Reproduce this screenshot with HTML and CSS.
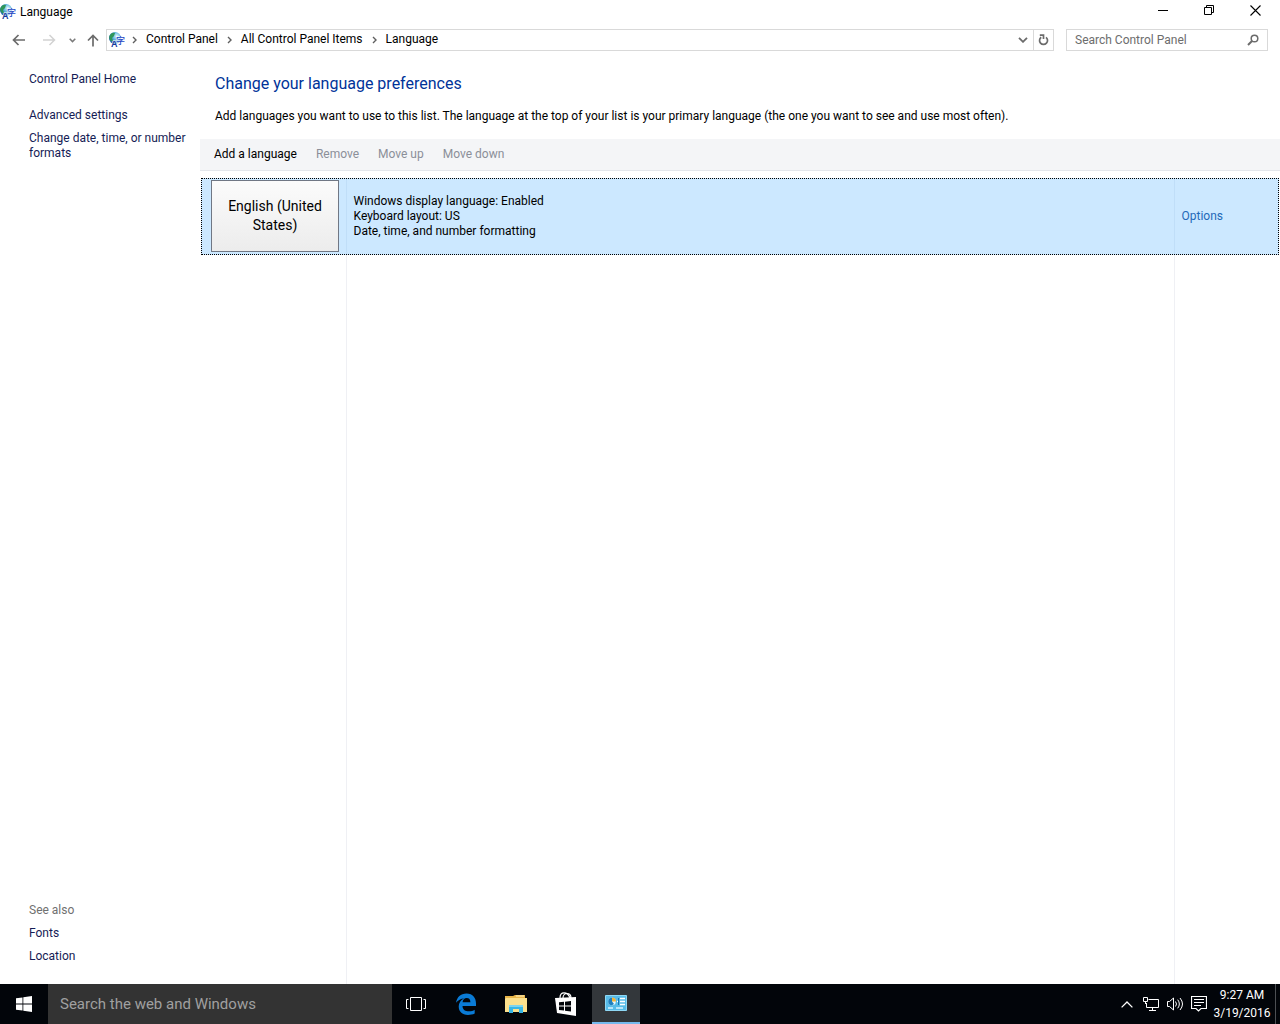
FILE: index.html
```html
<!DOCTYPE html>
<html lang="en">
<head>
<meta charset="utf-8">
<title>Language</title>
<link rel="stylesheet" href="styles.css">
</head>
<body>
<svg class="defs" aria-hidden="true">
  <defs>
    <radialGradient id="globe" cx="65%" cy="35%" r="75%">
      <stop offset="0" stop-color="#e4f8ff"/>
      <stop offset="0.45" stop-color="#5cb4dc"/>
      <stop offset="1" stop-color="#0a4f9c"/>
    </radialGradient>
    <symbol id="language" viewBox="0 0 16 16">
      <circle cx="6" cy="6" r="6" fill="url(#globe)"/>
      <path d="M1 3Q3 0 6 1L5 4L3 6L4 9L2 9Q-1 6 1 3Z" fill="#2f9659"/>
      <path d="M7 4H16V12H9V16H2V12L4 8H7Z" fill="#fff" opacity=".6"/>
      <text class="glyph-a" x="2" y="15">A</text>
      <text class="glyph-zi" x="7" y="12">字</text>
    </symbol>
    <symbol id="chevron" viewBox="0 0 5 8">
      <path d="M1 1L4 4L1 7" fill="none" stroke="currentColor" stroke-width="1.4"/>
    </symbol>
  </defs>
</svg>

<header class="titlebar">
  <svg class="app-icon"><use href="#language"/></svg>
  <h1 class="window-title">Language</h1>
  <button class="window-button" aria-label="Minimize"><svg width="11" height="11" viewBox="0 0 11 11"><path d="M0 5.5H10" stroke="#000"/></svg></button>
  <button class="window-button" aria-label="Restore"><svg width="11" height="11" viewBox="0 0 11 11"><path d="M.5 2.5H7.500V9.500H.5ZM2.500 2.500V.5H9.500V7.500H7.500" fill="none" stroke="#000"/></svg></button>
  <button class="window-button" aria-label="Close"><svg width="11" height="11" viewBox="0 0 11 11"><path d="M.5 .5L10.500 10.500M10.500 .5L.5 10.500" stroke="#000" stroke-width="1.1"/></svg></button>
</header>

<nav class="navbar" aria-label="Address">
  <button class="nav-button" aria-label="Back"><svg width="14" height="12" viewBox="0 0 14 12"><path d="M1.500 6H13M6.500 1L1.500 6L6.500 11" fill="none" stroke="#6b6b6b" stroke-width="1.700"/></svg></button>
  <button class="nav-button" aria-label="Forward" disabled><svg width="14" height="12" viewBox="0 0 14 12"><path d="M1 6H12.500M7.500 1L12.500 6L7.500 11" fill="none" stroke="#d2d2d2" stroke-width="1.500"/></svg></button>
  <button class="nav-button recent" aria-label="Recent locations"><svg width="7" height="5" viewBox="0 0 7 5"><path d="M.7 .8L3.500 3.600L6.300 .8" fill="none" stroke="#7a7a7a" stroke-width="1.500"/></svg></button>
  <button class="nav-button up" aria-label="Up"><svg width="12" height="13" viewBox="0 0 12 13"><path d="M6 12.500V1.500M1 6.500L6 1.500L11 6.500" fill="none" stroke="#6b6b6b" stroke-width="1.700"/></svg></button>
  <div class="address">
    <svg class="app-icon"><use href="#language"/></svg>
    <svg class="crumb-arrow"><use href="#chevron"/></svg>
    <a class="crumb" href="#">Control Panel</a>
    <svg class="crumb-arrow"><use href="#chevron"/></svg>
    <a class="crumb" href="#">All Control Panel Items</a>
    <svg class="crumb-arrow"><use href="#chevron"/></svg>
    <a class="crumb" href="#">Language</a>
    <button class="address-button history" aria-label="Previous locations"><svg width="10" height="6" viewBox="0 0 10 6"><path d="M1 .8L5 4.800L9 .8" fill="none" stroke="#6b6b6b" stroke-width="1.800"/></svg></button>
    <button class="address-button refresh" aria-label="Refresh"><svg width="11" height="12" viewBox="0 0 11 12"><path d="M8 3.300A4 4 0 1 1 3.200 3.200M1.800 1.200H5.500V5" fill="none" stroke="#6b6b6b" stroke-width="1.700"/></svg></button>
  </div>
  <label class="search">
    <input class="search-input" type="text" placeholder="Search Control Panel" aria-label="Search Control Panel">
    <svg width="12" height="12" viewBox="0 0 12 12"><path d="M5 7L1 11" stroke="#6b6b6b" stroke-width="2"/><circle cx="7.500" cy="4.500" r="3.300" fill="none" stroke="#6b6b6b" stroke-width="1.500"/></svg>
  </label>
</nav>

<div class="content">
  <aside class="sidebar">
    <a class="side-link home" href="#">Control Panel Home</a>
    <a class="side-link" href="#">Advanced settings</a>
    <a class="side-link" href="#">Change date, time, or number formats</a>
    <div class="see-also">
      <h3 class="see-title">See also</h3>
      <a class="side-link" href="#">Fonts</a>
      <a class="side-link" href="#">Location</a>
    </div>
  </aside>
  <main class="main">
    <h2 class="heading">Change your language preferences</h2>
    <p class="intro">Add languages you want to use to this list. The language at the top of your list is your primary language (the one you want to see and use most often).</p>
    <div class="toolbar">
      <button class="tool">Add a language</button>
      <button class="tool" disabled>Remove</button>
      <button class="tool" disabled>Move up</button>
      <button class="tool" disabled>Move down</button>
    </div>
    <div class="list">
      <table class="languages">
        <tbody>
          <tr class="selected">
            <td class="name-cell"><button class="tile">English (United States)</button></td>
            <td class="detail-cell">Windows display language: Enabled<br>Keyboard layout: US<br>Date, time, and number formatting</td>
            <td class="option-cell"><a class="options" href="#">Options</a></td>
          </tr>
          <tr class="filler" aria-hidden="true"><td></td><td></td><td></td></tr>
        </tbody>
      </table>
    </div>
  </main>
</div>

<footer class="taskbar">
  <button class="task" aria-label="Start"><svg width="16" height="16" viewBox="0 0 16 16"><path d="M0 2.300L6.500 1.400V7.500H0ZM7.300 1.300L16 0V7.500H7.300ZM0 8.400H6.500V14.600L0 13.700ZM7.300 8.400H16V16L7.300 14.700Z" fill="#fff"/></svg></button>
  <input class="task-search" type="text" placeholder="Search the web and Windows" aria-label="Search the web and Windows">
  <button class="task" aria-label="Task view"><svg width="20" height="14" viewBox="0 0 20 14"><path d="M4.500 .5H15.500V13.500H4.500ZM2.500 2.500H.5V11.500H2.500M17.500 2.500H19.500V11.500H17.500" fill="none" stroke="#fff"/></svg></button>
  <button class="task" aria-label="Edge"><svg width="22" height="22" viewBox="0 0 22 22"><path d="M1 9.800C2 4 5.500 .5 11.500 .5C18 .5 21 5 21 10.500V13H7.500C7.700 17 10.500 18.300 13.800 18.300C16.300 18.300 18.200 17.600 19.700 16.700V20.600C17.700 21.600 15.500 22 13 22C7 22 3.700 18.500 3.700 13.600C3.700 9.800 5.800 7 9 5.500C6 5.700 3 7 1 9.800ZM7.600 9.300H15.400C15.400 6.500 14.200 5 11.700 5C9.300 5 7.800 6.800 7.600 9.300Z" fill="#0a7bd6"/></svg></button>
  <button class="task" aria-label="File Explorer"><svg width="22" height="18" viewBox="0 0 22 18"><path d="M0 1H8L10 0H20V3H22V17H0Z" fill="#e9b64a"/><path d="M1 3H22V17H0V4Z" fill="#fbe08d"/><path d="M11 1H19" stroke="#fff3c4"/><path d="M4 18V10H18V18H14V14H8V18Z" fill="#38b6e6"/><path d="M4 10H18V12H4Z" fill="#7cd4ef"/></svg></button>
  <button class="task" aria-label="Store"><svg width="22" height="24" viewBox="0 0 22 24"><path d="M5 6C5 2 7 .8 9 .8C12 .8 14 3 15 6M8 6C8 3 10 1.500 12 1.500C15 1.500 16 4 16 6" fill="none" stroke="#fff" stroke-width="1.200"/><path d="M0 6L21 5V24L2 21Z" fill="#fff"/><path d="M4 10.300L9 9.800V13.500H4ZM10 9.700L16 9V13.500H10ZM4 14.500H9V18.500L4 18ZM10 14.500H16V19.500L10 18.700Z" fill="#02050a"/></svg></button>
  <button class="task active" aria-label="Control Panel"><svg width="22" height="16" viewBox="0 0 22 16"><path d="M.5 .5H21.500V15.500H.5Z" fill="#58bce8" stroke="#8fd8f5"/><circle cx="7" cy="6.500" r="3.800" fill="#e7f7fd"/><path d="M7 6.500V2.500A4 4 0 0 1 11 6.500Z" fill="#f0b43c"/><path d="M7 6.500V2.700A3.800 3.800 0 0 0 7 10.300L9 9Z" fill="#207fbd"/><path d="M15 3.500H20M15 6.500H20M15 9.500H20M12 6.500H14" stroke="#fff" stroke-width="1.500"/><path d="M13.500 3V10" stroke="#1777b6"/><path d="M3 13H8M11 13H18" stroke="#d9f3ff" stroke-width="1.500"/></svg></button>
  <div class="tray">
    <button class="tray-button" aria-label="Show hidden icons"><svg width="12" height="7" viewBox="0 0 12 7"><path d="M.6 6.400L6 1L11.400 6.400" fill="none" stroke="#fff" stroke-width="1.300"/></svg></button>
    <button class="tray-button" aria-label="Network"><svg width="16" height="14" viewBox="0 0 16 14"><path d="M5.500 2.500H15.500V10.500H3.500V6M9.500 10.500V13M6 13.500H13M.5 .5H4.500V4.500H.5ZM2.500 4.500V7" fill="none" stroke="#fff"/></svg></button>
    <button class="tray-button" aria-label="Volume"><svg width="17" height="14" viewBox="0 0 17 14"><path d="M.5 4.500H2.500L6.500 1V13L2.500 9.500H.5ZM8.500 4.500Q10.500 7 8.500 9.500M10.700 2.700Q14 7 10.700 11.300M13 1Q18 7 13 13" fill="none" stroke="#fff"/></svg></button>
    <button class="tray-button" aria-label="Notifications"><svg width="16" height="16" viewBox="0 0 16 16"><path d="M.5 .5H15.500V12.500H10L7.500 15L5 12.500H.5ZM3 3.500H13M3 6.500H13M3 9.500H10" fill="none" stroke="#fff" stroke-width="1.200"/></svg></button>
    <button class="clock"><time>9:27 AM</time><time>3/19/2016</time></button>
  </div>
</footer>
</body>
</html>
```
FILE: styles.css
```css
* { box-sizing: border-box; }

body {
  display: flex;
  flex-direction: column;
  min-height: 100vh;
  margin: 0;
  background: #fff;
  color: #000;
  font: 12px/15px Roboto, "Open Sans", sans-serif;
}

button, input { font: inherit; color: inherit; }
button { padding: 0; border: 0; background: none; }
a { color: inherit; text-decoration: none; }
svg { display: block; flex: none; }
h1, h2, h3, p { margin: 0; font-weight: 400; }

.defs { position: absolute; width: 0; height: 0; }
.app-icon { width: 16px; height: 16px; }
.glyph-a { font: 700 9px "Liberation Sans", sans-serif; fill: #14379c; }
.glyph-zi { font: 500 9px "Noto Sans CJK JP", sans-serif; fill: #1c45c4; }

.titlebar { display: flex; align-items: center; height: 24px; }
.window-title { flex: 1; padding-left: 4px; font-size: 12px; }
.window-button {
  display: flex;
  align-items: center;
  justify-content: center;
  width: 46px;
  height: 20px;
  align-self: flex-start;
}
.window-button:last-child { margin-right: 2px; }

.navbar {
  display: flex;
  align-items: center;
  height: 32px;
  padding: 0 12px 0 4px;
}
.nav-button { display: flex; align-items: center; justify-content: center; width: 30px; height: 22px; }
.nav-button.recent { width: 16px; }
.nav-button.up { width: 26px; }
.address {
  display: flex;
  flex: 1;
  align-items: center;
  height: 22px;
  margin-right: 12px;
  padding-left: 2px;
  border: 1px solid #d9d9d9;
}
.crumb { padding-bottom: 1px; }
.crumb-arrow { width: 5px; height: 8px; margin: 0 9px; color: #5f5f5f; }
.app-icon + .crumb-arrow { margin-left: 7px; }
.address-button { display: flex; align-items: center; justify-content: center; width: 20px; height: 20px; }
.history { margin-left: auto; }
.refresh { border-left: 1px solid #d9d9d9; }
.search {
  display: flex;
  align-items: center;
  width: 202px;
  height: 22px;
  padding: 0 8px;
  border: 1px solid #d9d9d9;
}
.search-input { flex: 1; min-width: 0; padding: 0; border: 0; outline: 0; background: none; }
.search-input::placeholder { color: #6d6d6d; }

.content { display: flex; flex: 1; }

.sidebar {
  display: flex;
  flex-direction: column;
  gap: 8px;
  width: 200px;
  padding: 16px 8px 20px 29px;
}
.side-link { color: #151c55; }
.side-link.home { margin-bottom: 13px; }
.see-also { display: flex; flex-direction: column; gap: 8px; margin-top: auto; }
.see-title { color: #707070; font-size: 12px; }

.main { display: flex; flex: 1; flex-direction: column; min-width: 0; }
.heading { padding: 18px 15px 0; color: #003399; font-size: 16px; line-height: 20px; }
.intro { padding: 15px 15px 0; }
.toolbar {
  display: flex;
  align-items: center;
  gap: 19px;
  height: 32px;
  margin-top: 15px;
  padding-left: 14px;
  background: #f4f5f7;
  border-bottom: 1px solid #e3e6eb;
}
.tool:disabled { color: #8b8f99; }

.list { display: flex; flex: 1; padding: 7px 1px 0; }
.languages { width: 100%; border-collapse: collapse; table-layout: fixed; }
.languages td { padding: 0; }
.languages td + td { border-left: 1px solid #eff0f4; }
.selected { height: 77px; background: #cce8ff; outline: 1px dotted #000; outline-offset: -1px; }
.languages .selected td + td { border-color: #c0def8; }
.languages .name-cell { width: 145px; padding: 2px 0 0 10px; vertical-align: top; }
.tile {
  display: block;
  width: 128px;
  height: 72px;
  padding: 0 8px;
  border: 1px solid #707784;
  background: linear-gradient(#fbfbfb, #ececec);
  font-size: 14px;
  line-height: 19px;
}
.languages .detail-cell { padding-left: 7px; }
.languages .option-cell { width: 105px; padding-left: 7px; }
.options { color: #2468b8; }

.taskbar { display: flex; height: 40px; background: #02050a; color: #fff; }
.task { display: flex; align-items: center; justify-content: center; width: 48px; margin-right: 2px; }
.task:first-child { margin-right: 0; }
.task.active { background: #33373b; border-bottom: 2px solid #76b9ed; }
.task-search {
  width: 344px;
  padding: 0 12px;
  border: 0;
  background: #333;
  font-size: 15px;
}
.task-search::placeholder { color: #a0a0a0; }
.tray { display: flex; margin-left: auto; }
.tray-button { display: flex; align-items: center; justify-content: center; width: 24px; }
.clock {
  display: flex;
  flex-direction: column;
  align-items: center;
  justify-content: center;
  width: 65px;
  padding-right: 2px;
  margin-right: 4px;
  line-height: 18px;
  border-right: 1px solid #4c4f53;
}
```
